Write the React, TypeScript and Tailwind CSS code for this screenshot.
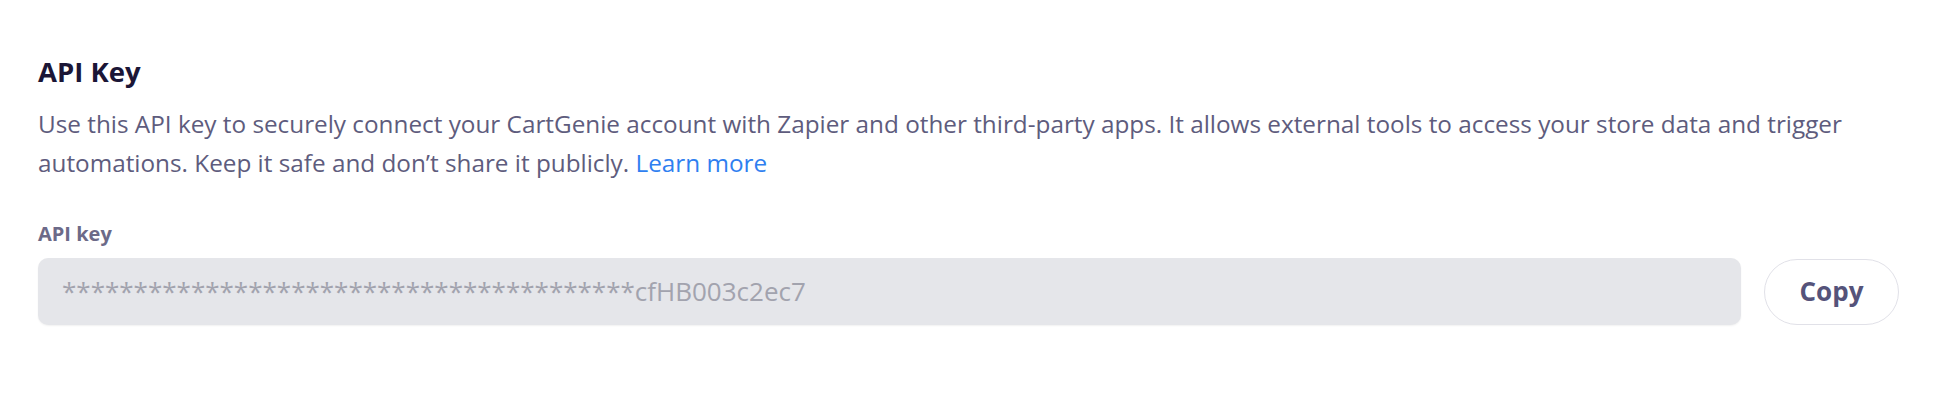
export default function App() {
  const masked = '*'.repeat(40) + 'cfHB003c2ec7';

  return (
    <div className="min-h-[408px] w-full bg-white pl-[38px] pr-[51px] pt-[54px] font-['Open_Sans',sans-serif]">
      <h2 className="text-[27.5px] font-bold leading-[36px] text-[#1b1636]">API Key</h2>
      <p className="mt-[15px] text-[24.3px] leading-[38.5px] text-[#5e5c7d]">
        Use this API key to securely connect your CartGenie account with Zapier and other third-party apps. It allows
        external tools to access your store data and trigger automations. Keep it safe and don’t share it publicly.{' '}
        <a href="#" className="text-[#2f7ff0]">
          Learn more
        </a>
      </p>

      <label className="mt-[38px] block text-[20px] font-bold leading-[28px] text-[#6c6a88]">API key</label>
      <div className="mt-[10px] flex items-center gap-[23px]">
        <div className="flex h-[67px] flex-1 items-center rounded-[10px] bg-[#e5e6ea] px-6 shadow-[0_1px_2px_rgba(0,0,0,0.06)]">
          <span className="text-[26px] text-[#a2a3ae]">{masked}</span>
        </div>
        <button className="h-[66px] w-[135px] rounded-full border border-[#e1e1e8] bg-white text-[26px] font-bold text-[#55537a]">
          Copy
        </button>
      </div>
    </div>
  );
}
